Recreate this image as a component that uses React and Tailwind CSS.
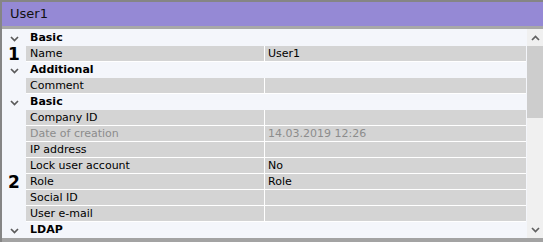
import React from 'react';

const rows = [
  { type: 'group', label: 'Basic' },
  { type: 'prop', label: 'Name', value: 'User1', mark: '1' },
  { type: 'group', label: 'Additional' },
  { type: 'prop', label: 'Comment', value: '' },
  { type: 'group', label: 'Basic' },
  { type: 'prop', label: 'Company ID', value: '' },
  { type: 'prop', label: 'Date of creation', value: '14.03.2019 12:26', disabled: true },
  { type: 'prop', label: 'IP address', value: '' },
  { type: 'prop', label: 'Lock user account', value: 'No' },
  { type: 'prop', label: 'Role', value: 'Role', mark: '2' },
  { type: 'prop', label: 'Social ID', value: '' },
  { type: 'prop', label: 'User e-mail', value: '' },
  { type: 'group', label: 'LDAP' },
];

function Chevron({ up = false, className = '' }) {
  return (
    <svg width="9" height="6" viewBox="0 0 9 6" className={className}>
      <path
        d={up ? 'M1 5 L4.5 1.5 L8 5' : 'M1 1 L4.5 4.5 L8 1'}
        stroke="currentColor"
        strokeWidth="1.7"
        fill="none"
      />
    </svg>
  );
}

function Row({ row }) {
  if (row.type === 'group') {
    return (
      <div className="flex h-[16px] items-center pt-[1px]">
        <div className="flex w-[24px] justify-center pl-[1px] text-[#5a5a5a]">
          <Chevron />
        </div>
        <span className="pl-[4px] font-bold text-black">{row.label}</span>
      </div>
    );
  }
  return (
    <div className="flex h-[16px]">
      <div className="flex w-[24px] items-center justify-center pt-[1px] text-[17px] font-bold leading-none text-black">
        {row.mark}
      </div>
      <div className="flex w-[500px] border-b border-white bg-[#d4d4d4]">
        <div
          className={`w-[239px] border-r border-white pl-[4px] leading-[16px] ${
            row.disabled ? 'text-[#8c8c8c]' : 'text-black'
          }`}
        >
          {row.label}
        </div>
        <div
          className={`flex-1 pl-[3px] leading-[16px] ${
            row.disabled ? 'text-[#8c8c8c]' : 'text-black'
          }`}
        >
          {row.value}
        </div>
      </div>
    </div>
  );
}

export default function App() {
  return (
    <div
      className="flex h-[242px] w-[543px] flex-col border-l-2 border-t-2 border-[#858585] bg-[#f4f6fb] text-[11px]"
      style={{ fontFamily: '"DejaVu Sans", Verdana, sans-serif' }}
    >
      {/* title bar */}
      <div className="flex h-[27px] shrink-0 items-center border-b-[3px] border-[#a8a8a8] bg-[#9589d5] pl-[8px] text-[13px] text-[#111]">
        User1
      </div>

      {/* property grid */}
      <div className="flex flex-1 overflow-hidden pt-[1px]">
        <div className="flex-1">
          {rows.map((row, i) => (
            <Row key={i} row={row} />
          ))}
        </div>

        {/* scrollbar */}
        <div className="-mt-[1px] flex w-[16px] flex-col bg-[#f0f0f0]">
          <div className="flex h-[17px] items-center justify-center text-[#606060]">
            <Chevron up />
          </div>
          <div className="h-[72px] bg-[#cdcdcd]" />
          <div className="flex-1" />
          <div className="flex h-[17px] items-center justify-center text-[#606060]">
            <Chevron />
          </div>
        </div>
      </div>

      <div className="h-[4px] shrink-0 bg-[#a3a3a3]" />
    </div>
  );
}
